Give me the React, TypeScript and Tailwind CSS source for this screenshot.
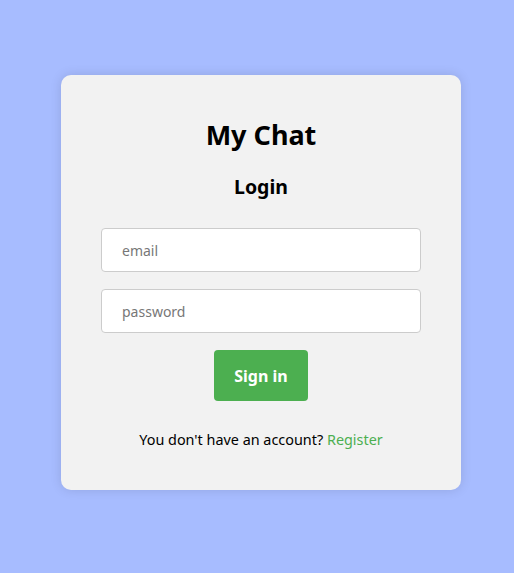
import React from "react";

export default function App() {
  return (
    <div
      className="w-full h-[573px] bg-[#a7bcff] flex items-center justify-center pl-[8px] pb-[8px]"
      style={{ fontFamily: '"Noto Sans", sans-serif' }}
    >
      <div className="w-[400px] h-[415px] bg-[#f2f2f2] rounded-[10px] shadow-[0_0_12px_rgba(0,0,0,0.12)] px-10 pt-10 pb-10 flex flex-col items-center">
        <h1 className="text-[27px] font-bold leading-[40px] text-black">My Chat</h1>
        <h2 className="mt-[18px] text-[19.5px] font-bold leading-[28px] text-black">Login</h2>
        <form className="mt-[27px] w-full flex flex-col items-center gap-[17px]" onSubmit={(e) => e.preventDefault()}>
          <input
            type="email"
            placeholder="email"
            className="w-full h-[44px] bg-white border border-[#cccccc] rounded-[4px] px-5 text-[14px] placeholder:text-[#777] outline-none"
          />
          <input
            type="password"
            placeholder="password"
            className="w-full h-[44px] bg-white border border-[#cccccc] rounded-[4px] px-5 text-[14px] placeholder:text-[#777] outline-none"
          />
          <button className="w-[94px] h-[51px] bg-[#4caf50] text-white font-bold text-[16px] rounded-[4px]">
            Sign in
          </button>
        </form>
        <p className="mt-[29px] text-[14.4px] leading-[20px] text-black">
          You don't have an account? <span className="text-[#4caf50]">Register</span>
        </p>
      </div>
    </div>
  );
}
